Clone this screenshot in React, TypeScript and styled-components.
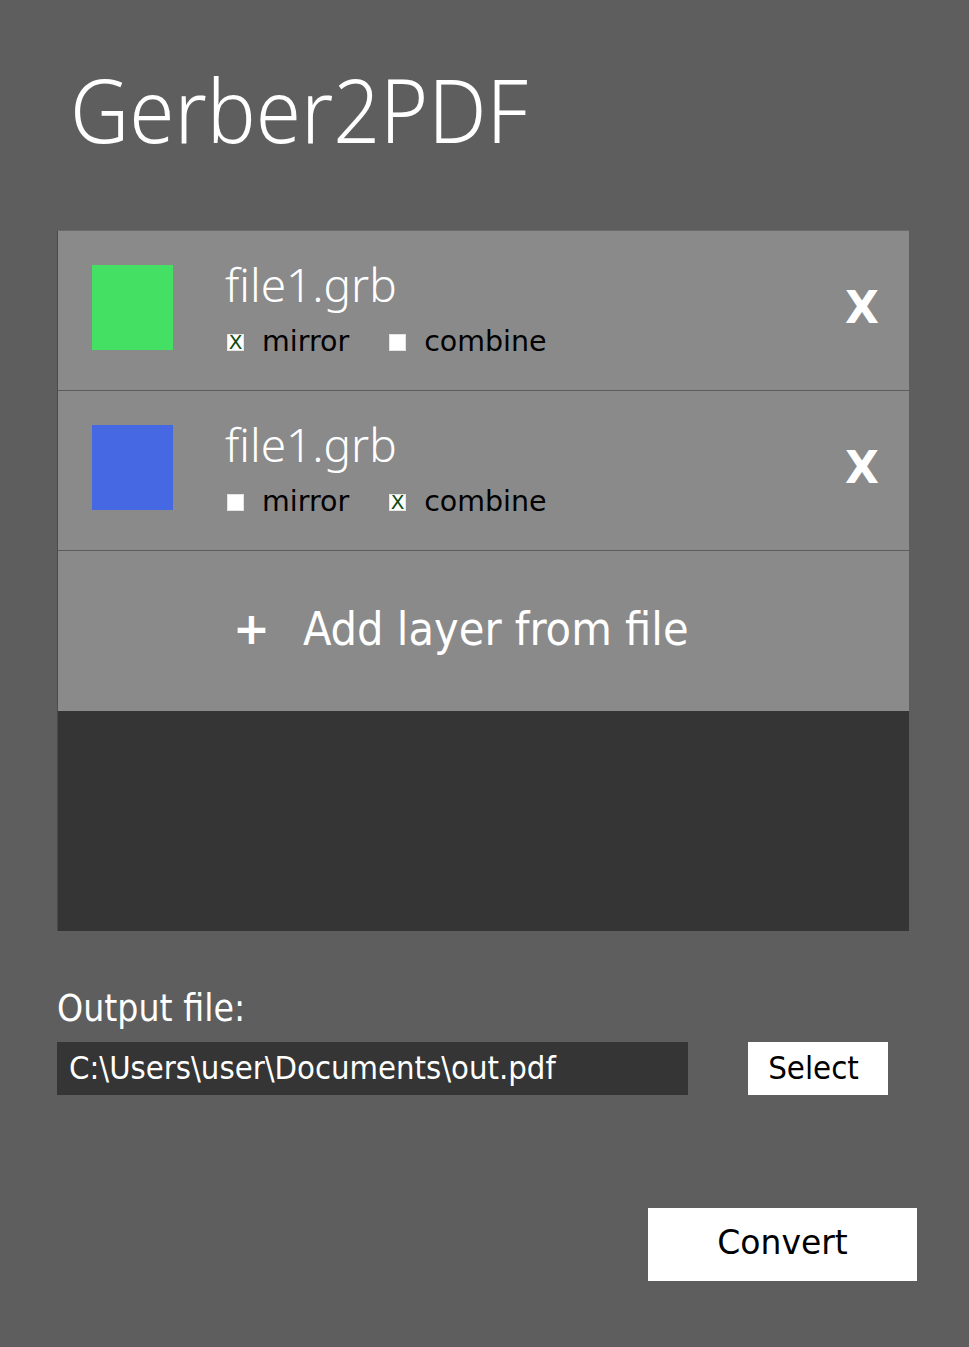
import React from "react";
import styled, { createGlobalStyle } from "styled-components";

const Global = createGlobalStyle`
  html, body { margin: 0; padding: 0; background: #5e5e5e; }
  body { width: 969px; min-height: 1347px; font-family: "DejaVu Sans", sans-serif; }
`;

const Page = styled.div`
  box-sizing: border-box;
  width: 969px;
  height: 1347px;
  padding: 0 60px 0 57px;
  display: flex;
  flex-direction: column;
`;

const Title = styled.h1`
  margin: 54px 0 0 13px;
  height: 176px;
  font-family: "Noto Sans", sans-serif;
  font-weight: 300;
  font-size: 89px;
  line-height: 110px;
  color: #ffffff;
  transform: scaleX(0.92);
  transform-origin: 0 0;
`;

const Panel = styled.div`
  box-sizing: border-box;
  height: 701px;
  border-top: 1px solid #6a6a6a;
  border-left: 1px solid #4a4a4a;
  display: flex;
  flex-direction: column;
  background: #353535;
`;

const LayerRow = styled.div`
  box-sizing: border-box;
  height: 160px;
  background: #8a8a8a;
  border-bottom: 1px solid #5c5c5c;
  display: flex;
  align-items: center;
  padding: 0 30px 6px 34px;
`;

const Swatch = styled.div<{ $color: string }>`
  width: 81px;
  height: 85px;
  background: ${(p) => p.$color};
  flex: none;
`;

const Info = styled.div`
  align-self: flex-start;
  margin: 28px 0 0 52px;
  display: flex;
  flex-direction: column;
  flex: 1;
`;

const FileName = styled.div`
  font-family: "Noto Sans", sans-serif;
  font-weight: 300;
  font-size: 46px;
  line-height: 50px;
  color: #ffffff;
`;

const Options = styled.div`
  display: flex;
  align-items: center;
  margin-top: 16px;
`;

const Option = styled.label`
  display: flex;
  align-items: center;
  font-family: "DejaVu Sans", sans-serif;
  font-size: 28.5px;
  color: #000000;
  line-height: 34px;
  & + & { margin-left: 38px; }
`;

const Box = styled.span<{ $checked?: boolean }>`
  box-sizing: border-box;
  width: 17px;
  height: 17px;
  background: #ffffff;
  display: inline-flex;
  align-items: center;
  justify-content: center;
  margin: 0 18px 0 2px;
  font-family: "DejaVu Sans", sans-serif;
  font-size: 20px;
  line-height: 17px;
  color: #0a4d12;
  border: 1px solid #e4e4e4;
`;

const Close = styled.button`
  background: none;
  border: none;
  padding: 0;
  font-family: "DejaVu Sans", sans-serif;
  font-weight: 700;
  font-size: 44px;
  line-height: 44px;
  color: #ffffff;
  cursor: pointer;
`;

const AddRow = styled.button`
  box-sizing: border-box;
  height: 160px;
  width: 100%;
  background: #8a8a8a;
  border: none;
  display: flex;
  align-items: center;
  padding: 0 0 4px 175px;
  color: #ffffff;
  cursor: pointer;
  flex: none;
`;

const Plus = styled.span`
  font-family: "DejaVu Sans", sans-serif;
  font-weight: 700;
  font-size: 44px;
  line-height: 44px;
  margin-right: 33px;
`;

const AddText = styled.span`
  font-family: "DejaVu Sans Condensed", "DejaVu Sans", sans-serif;
  font-stretch: condensed;
  font-size: 46.4px;
  line-height: 50px;
`;

const OutputLabel = styled.div`
  margin-top: 56px;
  font-family: "DejaVu Sans Condensed", "DejaVu Sans", sans-serif;
  font-stretch: condensed;
  font-size: 37px;
  line-height: 44px;
  color: #ffffff;
`;

const OutputRow = styled.div`
  display: flex;
  align-items: center;
  margin-top: 11px;
`;

const PathField = styled.div`
  box-sizing: border-box;
  width: 631px;
  height: 53px;
  background: #353535;
  color: #ffffff;
  display: flex;
  align-items: center;
  padding: 0 0 2px 12px;
  font-family: "DejaVu Sans Condensed", "DejaVu Sans", sans-serif;
  font-stretch: condensed;
  font-size: 32.5px;
`;

const SelectButton = styled.button`
  margin-left: 60px;
  width: 140px;
  height: 53px;
  background: #ffffff;
  border: none;
  font-family: "DejaVu Sans Condensed", "DejaVu Sans", sans-serif;
  font-stretch: condensed;
  font-size: 32.7px;
  color: #000000;
  padding: 0 9px 2px 0;
`;

const ConvertButton = styled.button`
  align-self: flex-end;
  margin: 113px -8px 0 0;
  width: 269px;
  height: 73px;
  background: #ffffff;
  border: none;
  font-family: "DejaVu Sans", sans-serif;
  font-size: 33px;
  color: #000000;
  padding: 0 0 4px 0;
`;

type Layer = { color: string; mirror: boolean; combine: boolean };

const layers: Layer[] = [
  { color: "#43e063", mirror: true, combine: false },
  { color: "#4669e3", mirror: false, combine: true },
];

export default function App() {
  return (
    <>
      <Global />
      <Page>
        <Title>Gerber2PDF</Title>
        <Panel>
          {layers.map((l, i) => (
            <LayerRow key={i}>
              <Swatch $color={l.color} />
              <Info>
                <FileName>file1.grb</FileName>
                <Options>
                  <Option>
                    <Box $checked={l.mirror}>{l.mirror ? "X" : ""}</Box>
                    mirror
                  </Option>
                  <Option>
                    <Box $checked={l.combine}>{l.combine ? "X" : ""}</Box>
                    combine
                  </Option>
                </Options>
              </Info>
              <Close>X</Close>
            </LayerRow>
          ))}
          <AddRow>
            <Plus>+</Plus>
            <AddText>Add layer from file</AddText>
          </AddRow>
        </Panel>
        <OutputLabel>Output file:</OutputLabel>
        <OutputRow>
          <PathField>C:\Users\user\Documents\out.pdf</PathField>
          <SelectButton>Select</SelectButton>
        </OutputRow>
        <ConvertButton>Convert</ConvertButton>
      </Page>
    </>
  );
}
